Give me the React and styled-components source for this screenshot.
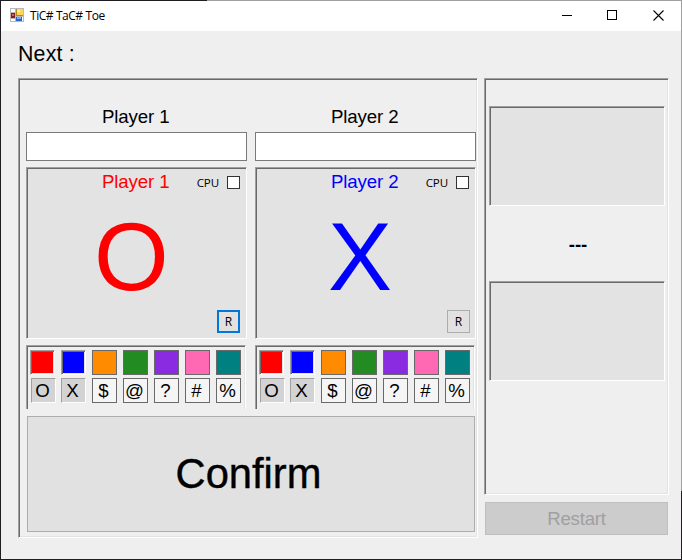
import React from 'react';
import styled, { createGlobalStyle, css } from 'styled-components';

const Global = createGlobalStyle`
  * { box-sizing: border-box; }
  body { margin: 0; background: #efefef; }
  button { margin: 0; padding: 0; border-radius: 0; font-family: inherit; }
`;

const sunken = css`
  border: 1px solid;
  border-color: #a0a0a0 #fff #fff #a0a0a0;
  box-shadow: inset 1px 1px #696969, inset -1px -1px #e3e3e3;
`;

const Window = styled.main`
  width: 682px;
  height: 560px;
  overflow: hidden;
  padding: 1px;
  font-family: 'Liberation Sans', Arial, sans-serif;
  color: #000;
  background:
    linear-gradient(90deg, #201d22 207px, #a0a0a0 207px) 0 0 / 100% 1px no-repeat,
    linear-gradient(#201d22, #201d22) 0 0 / 1px 100% no-repeat,
    linear-gradient(#201d22, #201d22) 0 100% / 100% 1px no-repeat,
    linear-gradient(#a0a0a0 491px, #201d22 491px) 100% 0 / 1px 100% no-repeat,
    #efefef;
`;

const TitleBar = styled.header`
  height: 30px;
  background: #fff;
  display: flex;
  align-items: flex-start;
  padding: 7px 0 0 9px;
`;

const Title = styled.h1`
  margin: 0 auto 0 6px;
  font: 400 12px/16px 'Open Sans', 'Noto Sans', sans-serif;
  letter-spacing: -0.48px;
  word-spacing: 0.3px;
  white-space: pre;
`;

const Controls = styled.div`
  display: flex;
  gap: 35px;
  padding: 1px 17px 0 0;
  svg { display: block; }
`;

const Next = styled.div`
  height: 47px;
  padding: 10px 0 0 17px;
  font-size: 21.33px;
  line-height: 26px;
  letter-spacing: 0.2px;
`;

const Body = styled.div`
  display: flex;
  gap: 6px;
  padding-left: 17px;
`;

const SetupPanel = styled.section`
  ${sunken}
  width: 460px;
  height: 460px;
  padding: 26px 0 0 7px;
`;

const Players = styled.div`
  display: flex;
  gap: 8px;
`;

const Player = styled.div`
  width: 221px;
`;

const Label = styled.label`
  display: block;
  height: 27px;
  padding-left: ${(p) => p.$indent}px;
  font-size: 18.67px;
  letter-spacing: -0.12px;
  line-height: 24px;
`;

const NameInput = styled.input`
  display: block;
  width: 221px;
  height: 29px;
  border: 1px solid #7a7a7a;
  border-radius: 0;
  background: #fff;
  outline: none;
`;

const Card = styled.div`
  ${sunken}
  height: 172px;
  margin-top: 6px;
  background: #e3e3e3;
  color: ${(p) => p.$color};
  display: flex;
  flex-direction: column;
`;

const CardHead = styled.div`
  display: flex;
  height: 34px;
  padding: 2px 6px 0 ${(p) => p.$indent}px;
  font-size: 18.67px;
  letter-spacing: -0.12px;
  line-height: 24px;
`;

const Cpu = styled.label`
  display: flex;
  margin-left: auto;
  gap: 8px;
  padding-top: 6px;
  color: #000;
  font: 400 11.6px/13px 'Open Sans', 'Noto Sans', sans-serif;
`;

const Check = styled.span`
  width: 13px;
  height: 13px;
  border: 1px solid #333;
  background: #fff;
`;

const Mark = styled.div`
  height: 108px;
  padding-left: ${(p) => p.$indent}px;
  font-size: 96px;
  line-height: 110px;
`;

const ResetButton = styled.button`
  align-self: flex-end;
  width: 23px;
  height: 23px;
  margin-right: ${(p) => p.$right}px;
  border: ${(p) => (p.$focused ? '2px solid #0078d7' : '1px solid #adadad')};
  background: #e1e1e1;
  color: #000;
  font: 400 12px/16px 'Open Sans', 'Noto Sans', sans-serif;
`;

const Picker = styled.div`
  width: 220px;
  height: 64px;
  margin-top: 6px;
  padding: 4px 0 0 3px;
  border: solid #a0a0a0;
  border-width: 1px 1px 0;
  border-right-color: #fff;
  box-shadow: inset 1px 1px #696969, inset -1px 0 #e3e3e3;
`;

const PickRow = styled.div`
  display: flex;
  gap: 6px;
  height: 28px;
`;

const Swatch = styled.button`
  width: 25px;
  height: 25px;
  border: 1px solid #696969;
  background: ${(p) => p.$color};
  ${(p) => p.$used && sunken}
`;

const Glyph = styled.button`
  width: 25px;
  height: 25px;
  padding-right: 2px;
  border: 1px solid #696969;
  background: #f5f5f5;
  color: #000;
  font-size: 18.67px;
  line-height: 24px;
  display: flex;
  justify-content: center;
  ${(p) => p.$used && css`
    border-color: #a0a0a0 #fff #fff #a0a0a0;
    background: #d3d3d3;
  `}
  &:first-child { margin: 0 -1px 0 1px; }
`;

const Confirm = styled.button`
  display: block;
  width: 448px;
  height: 116px;
  margin: 7px 0 0 1px;
  padding-right: 5px;
  border: 1px solid #adadad;
  background: #e1e1e1;
  color: #000;
  font-size: 41.7px;
  -webkit-text-stroke: 0.4px #000;
`;

const Side = styled.aside`
  width: 185px;
`;

const ScorePanel = styled.section`
  ${sunken}
  height: 417px;
  padding: 27px 0 0 4px;
`;

const ScoreBox = styled.div`
  ${sunken}
  width: 176px;
  height: 100px;
  background: #e3e3e3;
`;

const Score = styled.div`
  width: 178px;
  height: 75px;
  font-size: 18.67px;
  font-weight: 700;
  line-height: 78px;
  text-align: center;
`;

const Restart = styled.button`
  display: block;
  width: 183px;
  height: 33px;
  margin: 7px 0 0 1px;
  border: 1px solid #bfbfbf;
  background: #ccc;
  color: #a0a0a0;
  font-size: 18.67px;
  letter-spacing: -0.2px;
`;

const colors = ['#ff0000', '#0000ff', '#ff8c00', '#228b22', '#8a2be2', '#ff69b4', '#008080'];
const glyphs = ['O', 'X', '$', '@', '?', '#', '%'];
const players = [
  { name: 'Player 1', mark: 'O', color: '#ff0000', focused: true, indent: 76, markIndent: 67, right: 6 },
  { name: 'Player 2', mark: 'X', color: '#0000ff', focused: false, indent: 76, markIndent: 72, right: 5 },
];

function AppIcon() {
  return (
    <svg width="14" height="14" viewBox="0 0 14 14" shapeRendering="crispEdges">
      <path fill="#b9b9b9" d="M0 0h14v14H0z" />
      <path fill="#fff" d="M1 1h4v3H1zM1 11h4v2H1z" />
      <path fill="#8d1a16" d="M1 5h4v5H1z" />
      <path fill="#e0604f" d="M2 6h2v2H2z" />
      <path fill="#b88a13" d="M6 1h7v7H6z" />
      <path fill="#ffd65a" d="M7 1h6v6H7z" />
      <path fill="#fff0a6" d="M7 2h3v2H7z" />
      <path fill="#2866c8" d="M6 9h6v4H6z" />
      <path fill="#76adf4" d="M7 9h4v2H7z" />
      <path fill="#fff" d="M12 9h1v4h-1z" />
    </svg>
  );
}

function WindowControls() {
  return (
    <Controls>
      <svg width="10" height="13" shapeRendering="crispEdges"><path fill="#000" d="M0 6h10v1H0z" /></svg>
      <svg width="11" height="13" shapeRendering="crispEdges"><path fill="none" stroke="#000" d="M.5 2.5h9v9h-9z" transform="translate(0 -1)" /></svg>
      <svg width="11" height="13"><path stroke="#000" strokeWidth="1.1" d="M.5 1.5l10 10M10.5 1.5l-10 10" /></svg>
    </Controls>
  );
}

function PlayerSetup({ player }) {
  return (
    <Player>
      <Label $indent={player.indent}>{player.name}</Label>
      <NameInput />
      <Card $color={player.color}>
        <CardHead $indent={player.indent - 1}>
          {player.name}
          <Cpu>CPU<Check /></Cpu>
        </CardHead>
        <Mark $indent={player.markIndent}>{player.mark}</Mark>
        <ResetButton $focused={player.focused} $right={player.right}>R</ResetButton>
      </Card>
      <Picker>
        <PickRow>{colors.map((c, i) => <Swatch key={c} $color={c} $used={i < 2} />)}</PickRow>
        <PickRow>{glyphs.map((g, i) => <Glyph key={g} $used={i < 2}>{g}</Glyph>)}</PickRow>
      </Picker>
    </Player>
  );
}

export default function App() {
  return (
    <Window>
      <Global />
      <TitleBar>
        <AppIcon />
        <Title>TiC# TaC# Toe</Title>
        <WindowControls />
      </TitleBar>
      <Next>Next :</Next>
      <Body>
        <SetupPanel>
          <Players>
            {players.map((p) => <PlayerSetup key={p.name} player={p} />)}
          </Players>
          <Confirm>Confirm</Confirm>
        </SetupPanel>
        <Side>
          <ScorePanel>
            <ScoreBox />
            <Score>---</Score>
            <ScoreBox />
          </ScorePanel>
          <Restart disabled>Restart</Restart>
        </Side>
      </Body>
    </Window>
  );
}
